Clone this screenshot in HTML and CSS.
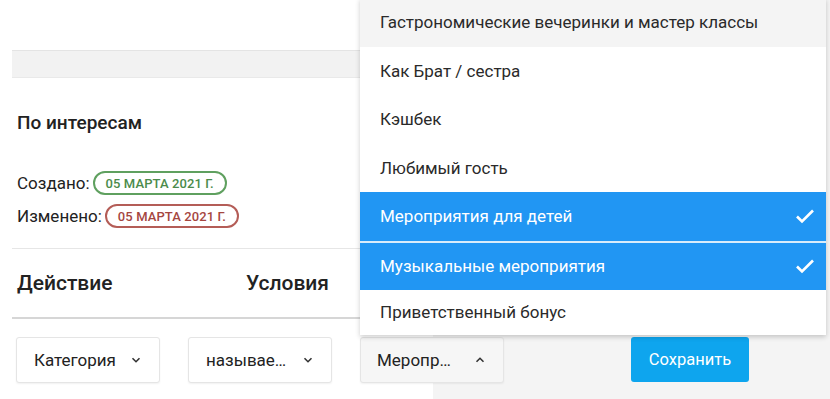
FILE: index.html
```html
<!DOCTYPE html>
<html lang="ru">
<head>
<meta charset="utf-8">
<title>По интересам</title>
<link rel="stylesheet" href="styles.css">
</head>
<body>
<div class="app">
  <div class="main">
    <div class="band"></div>
    <h2 class="title">По интересам</h2>
    <div class="meta">
      <div class="meta-row">Создано: <span class="badge badge-green">05 марта 2021 г.</span></div>
      <div class="meta-row">Изменено: <span class="badge badge-red">05 марта 2021 г.</span></div>
    </div>
    <hr class="rule">
    <div class="heads">
      <h3>Действие</h3>
      <h3>Условия</h3>
    </div>
    <hr class="rule rule-strong">
  </div>
  <div class="side"></div>
  <div class="controls">
    <div class="select"><span>Категория</span><svg class="chev" width="10" height="6" viewBox="0 0 10 6"><path d="M1.5 1.2l3.5 3.5 3.5-3.5" fill="none" stroke="#333" stroke-width="1.6"/></svg></div>
    <div class="select"><span>называе…</span><svg class="chev" width="10" height="6" viewBox="0 0 10 6"><path d="M1.5 1.2l3.5 3.5 3.5-3.5" fill="none" stroke="#333" stroke-width="1.6"/></svg></div>
    <div class="select select-open"><span>Меропр…</span><svg class="chev" width="10" height="6" viewBox="0 0 10 6"><path d="M1.5 4.8l3.5-3.5 3.5 3.5" fill="none" stroke="#333" stroke-width="1.6"/></svg></div>
    <button class="save">Сохранить</button>
  </div>
  <ul class="menu">
    <li class="item item-hover">Гастрономические вечеринки и мастер классы</li>
    <li class="item">Как Брат / сестра</li>
    <li class="item">Кэшбек</li>
    <li class="item">Любимый гость</li>
    <li class="item item-sel">Мероприятия для детей<svg class="check" width="20" height="16" viewBox="0 0 20 16"><path d="M2 8.5l5 5L18 2.5" fill="none" stroke="#fff" stroke-width="2.6"/></svg></li>
    <li class="item item-sel item-sel2">Музыкальные мероприятия<svg class="check" width="20" height="16" viewBox="0 0 20 16"><path d="M2 8.5l5 5L18 2.5" fill="none" stroke="#fff" stroke-width="2.6"/></svg></li>
    <li class="item item-last">Приветственный бонус</li>
  </ul>
</div>
</body>
</html>
```

FILE: styles.css
```css
* { box-sizing: border-box; }
html, body { margin: 0; padding: 0; }
body {
  font-family: Roboto, "Noto Sans", "Liberation Sans", sans-serif;
  color: #222;
  background: #fff;
  width: 830px;
  height: 399px;
  overflow: hidden;
}
.app {
  position: relative;
  display: grid;
  grid-template-columns: 433px 1fr;
  grid-template-rows: auto 1fr;
  height: 399px;
}
.main {
  grid-column: 1;
  grid-row: 1;
  padding-left: 12px;
}
.side {
  grid-column: 2;
  grid-row: 1 / 3;
  background: #f4f4f4;
}
.band {
  margin-top: 50px;
  height: 28px;
  background: #f2f2f2;
  border-top: 1px solid #e4e4e4;
  border-bottom: 1px solid #e9e9e9;
}
.title {
  margin: 33px 0 0 5px;
  font-size: 19px;
  line-height: 24px;
  font-weight: 500;
}
.meta {
  margin: 36px 0 0 5px;
  display: flex;
  flex-direction: column;
  gap: 9px;
}
.meta-row {
  display: flex;
  align-items: center;
  gap: 3px;
  font-size: 17px;
  height: 24px;
  color: #222;
}
.badge {
  display: inline-flex;
  align-items: center;
  height: 24px;
  padding: 0 11px;
  border: 2px solid;
  border-radius: 12px;
  font-size: 13px;
  font-weight: 500;
  text-transform: uppercase;
  letter-spacing: 0.1px;
}
.badge-green { border-color: #5fa05f; color: #4b8b4b; }
.badge-red { border-color: #b45d57; color: #a5463f; }
.rule {
  margin: 20px 0 0;
  border: 0;
  height: 1px;
  background: #e6e6e6;
}
.rule-strong {
  height: 2px;
  background: #d6d6d6;
}
.heads {
  margin: 20px 0 0 5px;
  display: grid;
  grid-template-columns: 229px auto;
}
.heads h3 {
  margin: 0;
  font-size: 21px;
  line-height: 28px;
  font-weight: 500;
}
.controls {
  grid-column: 1 / 3;
  grid-row: 2;
  display: flex;
  align-items: flex-start;
  gap: 28px;
  padding: 18px 0 0 16px;
  z-index: 1;
}
.select {
  width: 144px;
  height: 46px;
  display: flex;
  align-items: center;
  justify-content: space-between;
  padding: 0 18px 0 17px;
  background: #fff;
  border: 1px solid #e5e5e5;
  border-radius: 3px;
  box-shadow: 0 1px 2px rgba(0,0,0,0.06);
  font-size: 17px;
  color: #222;
}
.select-open { background: #f6f6f6; padding-left: 16px; }
.save {
  margin-left: 99px;
  width: 118px;
  height: 45px;
  border: 0;
  border-radius: 3px;
  background: #0ea5ee;
  color: #fff;
  font-family: inherit;
  font-size: 16.5px;
}
.menu {
  position: absolute;
  left: 360px;
  top: -2px;
  width: 466px;
  margin: 0;
  padding: 0;
  list-style: none;
  background: #fff;
  box-shadow: 0 2px 5px rgba(0,0,0,0.2);
  z-index: 2;
}
.item {
  height: 48.5px;
  display: flex;
  align-items: center;
  justify-content: space-between;
  padding: 0 11px 0 20px;
  font-size: 17px;
  color: #2a2a2a;
}
.item-hover { background: #f4f4f4; }
.item-sel { background: #2196f3; color: #fff; }
.item-sel2 { border-top: 2px solid #d8ecfb; height: 49px; }
.item-last { height: 45px; }
.check { display: block; }
```
